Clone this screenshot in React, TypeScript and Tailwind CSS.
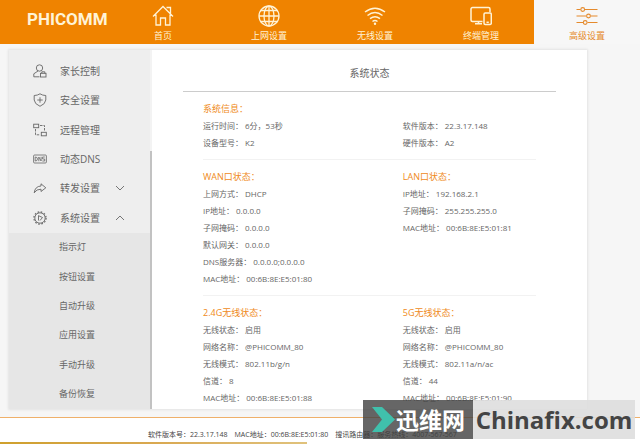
import type { ReactNode } from 'react'

interface Field {
  label: string
  value: string
}

interface Block {
  title: string
  fields: Field[]
}

const icons: Record<string, ReactNode> = {
  home: (
    <svg viewBox="0 0 22 22" className="size-[22px]" fill="none" stroke="currentColor" strokeWidth="1.3">
      <path d="M1 11.5 11 1.5l10 10M4 9.500v10.500h4.500v-7h5v7H18V9.500M14.500 2.500h4v6" />
    </svg>
  ),
  globe: (
    <svg viewBox="0 0 22 22" className="size-[22px]" fill="none" stroke="currentColor" strokeWidth="1.3">
      <circle cx="11" cy="11" r="10" />
      <ellipse cx="11" cy="11" rx="5" ry="10" />
      <path d="M11 1v20M1 11h20M2.5 5.5h17M2.5 16.5h17" />
    </svg>
  ),
  wifi: (
    <svg viewBox="0 0 22 22" className="size-[22px]" fill="none" stroke="currentColor" strokeWidth="1.5">
      <path d="M1 7q10-7.500 20 0M3.500 10.500q7.500-6 15 0M6 13.700q5-4 10 0M8.500 16.500q2.500-2 5 0" />
      <circle cx="11" cy="18.700" r="1.200" fill="currentColor" stroke="none" />
    </svg>
  ),
  devices: (
    <svg viewBox="0 0 22 22" className="size-[22px]" fill="none" stroke="currentColor" strokeWidth="1.500">
      <path d="M12.500 16.500H2.500a1.500 1.500 0 0 1-1.500-1.500V4a1.500 1.500 0 0 1 1.500-1.500h16A1.500 1.500 0 0 1 20 4v3M5 18.700h7M8.500 16.500v2" />
      <rect x="14" y="8" width="7.300" height="11.500" rx="1.200" />
      <path d="M16.500 17.300h2.300" />
    </svg>
  ),
  sliders: (
    <svg viewBox="0 0 22 22" className="size-[22px]" fill="none" stroke="currentColor" strokeWidth="1.1">
      <path d="M.5 4.500h4M9 4.500h12.500M.5 11H10M15 11h6.500M.5 17.500H7M11.500 17.500h10" />
      <circle cx="6.700" cy="4.500" r="1.900" />
      <circle cx="12.500" cy="11" r="1.900" />
      <circle cx="9.200" cy="17.500" r="1.900" />
    </svg>
  ),
  parent: (
    <svg viewBox="0 0 14 14" className="size-[14px]" fill="none" stroke="currentColor" strokeWidth="0.9">
      <circle cx="6.500" cy="4" r="3.200" />
      <path d="M5 7 .8 9.800v3h5.700" />
      <rect x="7.500" y="9.300" width="5.500" height="3.700" />
      <path d="M8.800 9.300V7.800h3v1.500" />
    </svg>
  ),
  shield: (
    <svg viewBox="0 0 14 14" className="size-[14px]" fill="none" stroke="currentColor" strokeWidth="0.9">
      <path d="M7 .8Q9.500 2.500 12.800 2.500V7Q12.500 11 7 13.300 1.500 11 1.200 7V2.500Q4.500 2.500 7 .8ZM7 4.300v5.400M4.300 7h5.400" />
    </svg>
  ),
  remote: (
    <svg viewBox="0 0 14 14" className="size-[14px]" fill="none" stroke="currentColor" strokeWidth="0.9">
      <rect x=".7" y="1.200" width="5" height="3.500" />
      <rect x="8.300" y="9.300" width="5" height="3.500" />
      <path d="M7 2.500h4.500V8M2.500 6v5.800H7" strokeDasharray="2.500 1" />
    </svg>
  ),
  dns: (
    <svg viewBox="0 0 14 14" className="size-[14px]" fill="none" stroke="currentColor" strokeWidth="0.8">
      <rect x=".6" y="3" width="12.800" height="8" rx="1" />
      <path d="M2.200 5v4q2.300 0 2.300-2t-2.300-2M5.800 9.200V5l2.300 4V4.800M11.800 5H9.600v2h2.100v2H9.400" />
    </svg>
  ),
  forward: (
    <svg viewBox="0 0 14 14" className="size-[14px]" fill="none" stroke="currentColor" strokeWidth="0.9" strokeLinejoin="round">
      <path d="M1.200 11.800Q2 5.300 8 5V2.800L12.800 6.800 8 10.500V8.200Q3.500 8 1.200 11.800Z" />
    </svg>
  ),
  gear: (
    <svg viewBox="0 0 14 14" className="size-[14px]" fill="none" stroke="currentColor" strokeWidth="0.9">
      <circle cx="7" cy="7" r="5.200" />
      <circle cx="7" cy="7" r="6.100" strokeWidth="1.200" strokeDasharray="1.600 1.594" />
      <path d="M5.500 4.500v5M5.500 4.700 9.500 6.500 7 9.500" />
    </svg>
  ),
}

const tabs = [
  { label: '首页', icon: 'home' },
  { label: '上网设置', icon: 'globe' },
  { label: '无线设置', icon: 'wifi' },
  { label: '终端管理', icon: 'devices' },
  { label: '高级设置', icon: 'sliders', active: true },
]

const menu = [
  { label: '家长控制', icon: 'parent' },
  { label: '安全设置', icon: 'shield' },
  { label: '远程管理', icon: 'remote' },
  { label: '动态DNS', icon: 'dns' },
  { label: '转发设置', icon: 'forward', arrow: 'M1 3l4 4 4-4' },
  { label: '系统设置', icon: 'gear', arrow: 'M1 7l4-4 4 4' },
]

const submenu = ['指示灯', '按钮设置', '自动升级', '应用设置', '手动升级', '备份恢复']

const sections: Block[][] = [
  [
    {
      title: '系统信息：',
      fields: [
        { label: '运行时间', value: '6分，53秒' },
        { label: '设备型号', value: 'K2' },
      ],
    },
    {
      title: '',
      fields: [
        { label: '软件版本', value: '22.3.17.148' },
        { label: '硬件版本', value: 'A2' },
      ],
    },
  ],
  [
    {
      title: 'WAN口状态：',
      fields: [
        { label: '上网方式', value: 'DHCP' },
        { label: 'IP地址', value: '0.0.0.0' },
        { label: '子网掩码', value: '0.0.0.0' },
        { label: '默认网关', value: '0.0.0.0' },
        { label: 'DNS服务器', value: '0.0.0.0;0.0.0.0' },
        { label: 'MAC地址', value: '00:6B:8E:E5:01:80' },
      ],
    },
    {
      title: 'LAN口状态：',
      fields: [
        { label: 'IP地址', value: '192.168.2.1' },
        { label: '子网掩码', value: '255.255.255.0' },
        { label: 'MAC地址', value: '00:6B:8E:E5:01:81' },
      ],
    },
  ],
  [
    {
      title: '2.4G无线状态：',
      fields: [
        { label: '无线状态', value: '启用' },
        { label: '网络名称', value: '@PHICOMM_80' },
        { label: '无线模式', value: '802.11b/g/n' },
        { label: '信道', value: '8' },
        { label: 'MAC地址', value: '00:6B:8E:E5:01:88' },
      ],
    },
    {
      title: '5G无线状态：',
      fields: [
        { label: '无线状态', value: '启用' },
        { label: '网络名称', value: '@PHICOMM_80' },
        { label: '无线模式', value: '802.11a/n/ac' },
        { label: '信道', value: '44' },
        { label: 'MAC地址', value: '00:6B:8E:E5:01:90' },
      ],
    },
  ],
]

function Header() {
  return (
    <header className="flex h-[44px] bg-[#ef8300] text-[#fff3d6]">
      <div className="flex w-[110px] shrink-0 items-center pl-[27px] pb-[6px]">
        <span className="font-['Roboto'] text-[17px] leading-[17px] font-bold">PHICOMM</span>
      </div>
      <nav className="flex flex-1">
        {tabs.map((tab) => (
          <a
            key={tab.label}
            href="#"
            className={
              tab.active
                ? 'flex flex-1 flex-col items-center gap-1 bg-[#f7f7f7] pt-[5px] text-[#e58a2c]'
                : 'flex flex-1 flex-col items-center gap-1 pt-[5px]'
            }
          >
            {icons[tab.icon]}
            <span className="text-[9px] leading-[10px]">{tab.label}</span>
          </a>
        ))}
      </nav>
    </header>
  )
}

function Sidebar() {
  return (
    <div className="flex w-[143px] shrink-0">
      <nav className="flex flex-1 flex-col bg-[#eee] pt-[6px] text-[#666]">
        <ul className="flex flex-1 flex-col">
          {menu.map((item) => (
            <li key={item.label} className="flex flex-1">
              <a href="#" className="flex flex-1 items-center pl-[24px] text-[10px] leading-[14px]">
                {icons[item.icon]}
                <span className="ml-[13px] w-[55px]">{item.label}</span>
                {item.arrow && (
                  <svg viewBox="0 0 10 10" className="size-[10px]" fill="none" stroke="currentColor" strokeWidth="0.9">
                    <path d={item.arrow} />
                  </svg>
                )}
              </a>
            </li>
          ))}
        </ul>
        <ul className="flex flex-1 flex-col bg-[#e6e6e6]">
          {submenu.map((label) => (
            <li key={label} className="flex flex-1">
              <a href="#" className="flex flex-1 items-center pl-[50px] text-[9px] leading-[14px]">
                {label}
              </a>
            </li>
          ))}
        </ul>
      </nav>
      {/* scrollbar, thumb at the bottom */}
      <div className="flex w-[2px] flex-col justify-end bg-[#f3f3f3]">
        <div className="h-[72%] bg-[#c2c2c2]" />
      </div>
    </div>
  )
}

function StatusBlock({ title, fields }: Block) {
  return (
    <div className="text-[8px] leading-[17px] text-[#666]">
      <h2 className="h-[17px] text-[9px] text-[#ef8a1a]">{title}</h2>
      <dl>
        {fields.map((field) => (
          <div key={field.label} className="flex gap-[2px]">
            <dt>{field.label}：</dt>
            <dd>{field.value}</dd>
          </div>
        ))}
      </dl>
    </div>
  )
}

function Watermark() {
  return (
    <div className="absolute right-[5px] bottom-[5px] flex h-[39px] items-center">
      <div className="flex h-full w-[110px] items-center bg-[#404040]/80 pl-[9px] text-white">
        <svg viewBox="0 0 23 25" className="h-[25px] w-[23px]" fill="#40c0ac">
          <path d="M0 0h10l13 12.500L10 25H0l10-12.500z" />
        </svg>
        <span className="ml-px text-[23px] leading-[30px] font-bold">迅维网</span>
      </div>
      <div className="flex h-full w-[162px] items-center justify-center bg-[#dedede]/90 text-[24px] leading-[30px] font-bold text-[#444]">
        Chinafix.com
      </div>
    </div>
  )
}

export default function App() {
  return (
    <div className="relative bg-[#f6f6f6] font-['Open_Sans','Noto_Sans_CJK_SC',sans-serif]">
      <Header />
      <div className="mt-[6px] mr-[53px] mb-2 ml-[9px] flex bg-white shadow-[0_0_2px_1px_#e4e4e4]">
        <Sidebar />
        <main className="flex-1 px-[31px] pb-[3px]">
          <h1 className="border-b border-[#ccc] pt-[16px] pb-[11px] text-center text-[10px] leading-[14px] text-[#666]">
            系统状态
          </h1>
          <div className="px-5">
            {sections.map((blocks, i) => (
              <section
                key={i}
                className="grid grid-cols-[3fr_2fr] border-b border-[#f2f2f2] py-2 last:border-b-0 last:pb-0"
              >
                {blocks.map((block, j) => (
                  <StatusBlock key={j} {...block} />
                ))}
              </section>
            ))}
          </div>
        </main>
      </div>
      <footer className="border-t border-[#efb06a] bg-white">
        <div className="flex h-[24px] gap-[7px] pt-[10px] pl-[148px] text-[7px] leading-[14px] text-[#444]">
          <span>软件版本号：22.3.17.148</span>
          <span>MAC地址：00:6B:8E:E5:01:80</span>
          <span>搜讯路由器：服务热线：4007-567-567</span>
        </div>
        <div className="h-[2px] w-[48%] bg-linear-to-r from-[#cfa02c] via-[#d9a850] to-[#e0c27c]" />
      </footer>
      <Watermark />
    </div>
  )
}
